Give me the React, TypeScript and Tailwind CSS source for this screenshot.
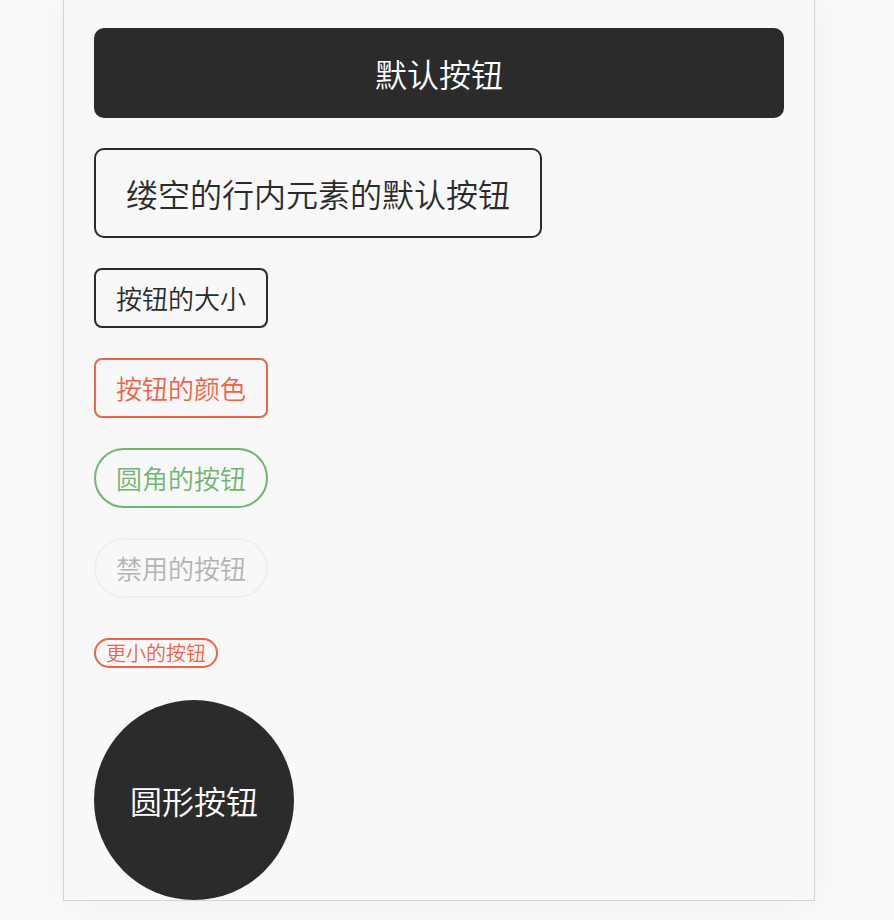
const FONT = "font-['Noto_Sans_CJK_SC','Noto_Sans',sans-serif] font-[350]"

// 线框小按钮：同一尺寸，颜色和圆角不同
const SMALL = 'h-[60px] px-[20px] border-2 text-[26px] leading-none flex items-center justify-center w-fit'

export default function App() {
  return (
    <div className={`min-h-[920px] bg-[#fafafa] pb-[19px] ${FONT}`}>
      <div className="ml-[63px] w-[752px] border-x border-b border-[#d4d4d4] bg-[#f8f8f8] px-[30px] pt-[28px] shadow-[0_0_40px_rgba(0,0,0,0.05)]">
        <button className="w-full h-[90px] rounded-[10px] bg-[#2b2b2b] text-white text-[32px] leading-none flex items-center justify-center">
          默认按钮
        </button>

        <button className="mt-[30px] h-[90px] px-[30px] rounded-[10px] border-2 border-[#2b2b2b] text-[#2b2b2b] text-[32px] leading-none flex items-center justify-center">
          缕空的行内元素的默认按钮
        </button>

        <button className={`mt-[30px] rounded-[8px] border-[#2b2b2b] text-[#2b2b2b] ${SMALL}`}>
          按钮的大小
        </button>

        <button className={`mt-[30px] rounded-[8px] border-[#ef6347] text-[#ef6347] ${SMALL}`}>
          按钮的颜色
        </button>

        <button className={`mt-[30px] rounded-full border-[#72b572] text-[#72b572] ${SMALL}`}>
          圆角的按钮
        </button>

        <button disabled className={`mt-[30px] rounded-full border-[#efefef] text-[#b3b3b3] ${SMALL}`}>
          禁用的按钮
        </button>

        <button className="mt-[40px] h-[30px] px-[10px] rounded-full border-2 border-[#ef6347] text-[#ef6347] text-[20px] leading-none flex items-center justify-center w-fit">
          更小的按钮
        </button>

        <button className="mt-[32px] w-[200px] h-[200px] rounded-full bg-[#2b2b2b] text-white text-[32px] leading-none flex items-center justify-center">
          圆形按钮
        </button>
      </div>
    </div>
  )
}
